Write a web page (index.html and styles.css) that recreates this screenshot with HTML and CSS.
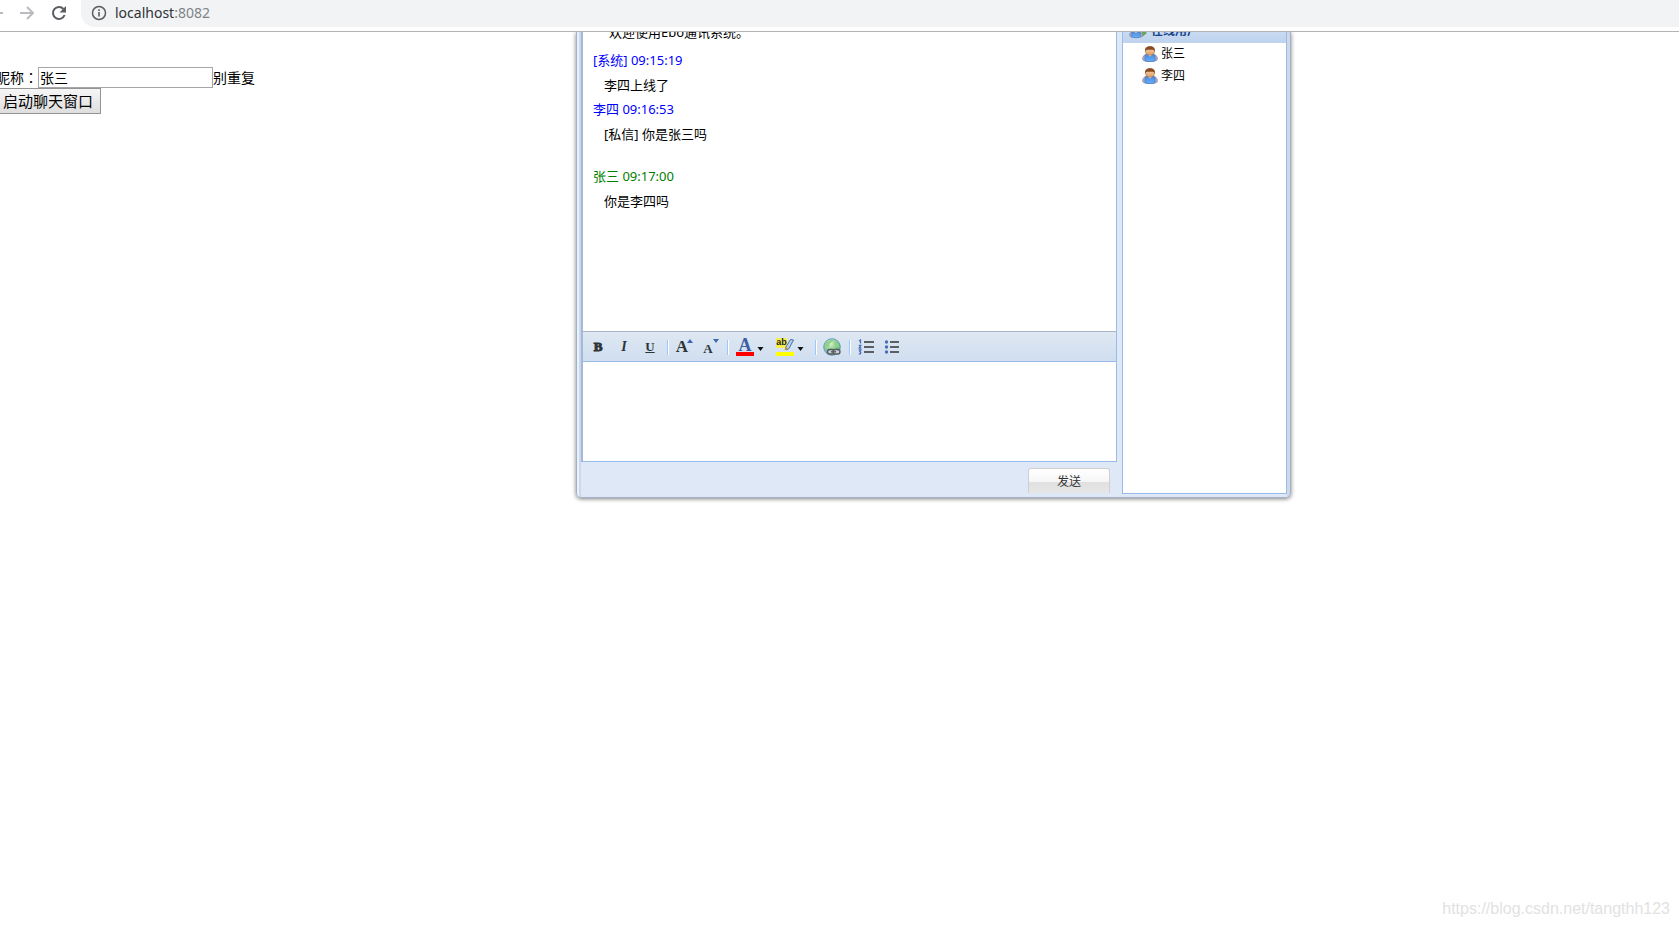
FILE: index.html
```html
<!DOCTYPE html>
<html lang="zh-CN">
<head>
<meta charset="utf-8">
<title>localhost:8082</title>
<link rel="stylesheet" href="styles.css">
</head>
<body>
<svg width="0" height="0" class="defs" aria-hidden="true">
  <defs>
    <linearGradient id="skin" x1="0" y1="0" x2="0" y2="1"><stop offset="0" stop-color="#fbd9b4"/><stop offset="1" stop-color="#dd9a62"/></linearGradient>
    <linearGradient id="shirt" x1="0" y1="0" x2="0" y2="1"><stop offset="0" stop-color="#4a86dc"/><stop offset="1" stop-color="#62b2ff"/></linearGradient>
    <radialGradient id="earth" cx=".4" cy=".3" r=".7"><stop offset="0" stop-color="#d7f2cf"/><stop offset="1" stop-color="#4fae58"/></radialGradient>
    <symbol id="user" viewBox="0 0 16 16">
      <path d="M.5 13C.5 10.500 2 8.800 4.500 8.300h7c2.500.5 4 2.200 4 4.700 0 1.800-3.200 2.600-7.500 2.600S.5 14.800.5 13z" fill="#a9a6bd" stroke="#8a8aa8" stroke-width=".6"/>
      <path d="M3.200 9.200L5 8.300h6l1.800.9.2 5.500c-1.300.6-3 .9-5 .9s-3.700-.3-5-.9z" fill="url(#shirt)" stroke="#4270bd" stroke-width=".6"/>
      <path d="M5.600 8.500h4.800L8 10.600z" fill="#e8f0fb"/>
      <ellipse cx="8" cy="5" rx="4.600" ry="4.300" fill="url(#skin)" stroke="#a8683a" stroke-width=".6"/>
      <path d="M3.200 5.200C2.600 2 4.700.3 8 .3s5.400 1.700 4.800 4.900C12 4 11 3.700 9.800 3.700H6.200C5 3.700 4 4 3.200 5.200z" fill="#8b4b20"/>
    </symbol>
  </defs>
</svg>

<header class="browser">
  <button class="nav" aria-label="后退"><svg width="18" height="18" viewBox="0 0 18 18"><path d="M17 9H3M9 3L3 9l6 6" fill="none" stroke="#b9bbbe" stroke-width="2"/></svg></button>
  <button class="nav" aria-label="前进"><svg width="18" height="18" viewBox="0 0 18 18"><path d="M2 9h13M9 3l6 6-6 6" fill="none" stroke="#b9bbbe" stroke-width="2"/></svg></button>
  <button class="nav reload" aria-label="刷新"><svg width="18" height="18" viewBox="0 0 18 18"><path d="M14.600 11A6 6 0 1 1 13.500 5" fill="none" stroke="#5a5d61" stroke-width="2"/><path d="M16 2v6.500H9.500z" fill="#5a5d61"/></svg></button>
  <div class="address">
    <svg width="16" height="16" viewBox="0 0 16 16"><circle cx="8" cy="8" r="6.500" fill="none" stroke="#5a5d61" stroke-width="1.500"/><path d="M8 7v4.500M8 4.300v1.600" stroke="#5a5d61" stroke-width="1.600"/></svg>
    <span>localhost<span class="port">:8082</span></span>
  </div>
</header>

<main class="page">
  <form class="login">
    <div class="row"><label for="nick">昵称<span class="colon" lang="zh-TW">：</span></label><input id="nick" type="text" value="张三"><span>别重复</span></div>
    <button class="start" type="button">启动聊天窗口</button>
  </form>

  <section class="window">
    <div class="chat">
      <div class="log">
        <p class="msg welcome">欢迎使用Ebo通讯系统。</p>
        <p class="who">[系统] 09:15:19</p>
        <p class="msg">李四上线了</p>
        <p class="who">李四 09:16:53</p>
        <p class="msg">[私信] 你是张三吗</p>
        <p class="who self">张三 09:17:00</p>
        <p class="msg">你是李四吗</p>
      </div>
      <div class="toolbar">
        <button class="tool bold" aria-label="粗体">B</button>
        <button class="tool italic" aria-label="斜体">I</button>
        <button class="tool under" aria-label="下划线">U</button>
        <i class="sep"></i>
        <button class="tool grow" aria-label="放大">A<svg width="6" height="4" viewBox="0 0 6 4"><path d="M0 4l3-4 3 4z" fill="#3f66b0"/></svg></button>
        <button class="tool shrink" aria-label="缩小">A<svg width="6" height="4" viewBox="0 0 6 4"><path d="M0 0h6L3 4z" fill="#3f66b0"/></svg></button>
        <i class="sep"></i>
        <button class="tool combo" aria-label="文字颜色"><span class="ink">A</span><svg width="7" height="4" viewBox="0 0 7 4"><path d="M.5 0h6l-3 4z" fill="#111"/></svg></button>
        <button class="tool combo" aria-label="背景颜色"><span class="mark"><b>ab</b><svg width="18" height="13" viewBox="0 0 18 13"><path d="M9.500 9.500L14.500 1.500l3 .5-4.500 8.500-3 1.500z" fill="#b9cbea" stroke="#4f6fa8"/><path d="M8.500 12.500l1-3.500 3 1.500z" fill="#c19840"/></svg></span><svg width="7" height="4" viewBox="0 0 7 4"><path d="M.5 0h6l-3 4z" fill="#111"/></svg></button>
        <i class="sep"></i>
        <button class="tool" aria-label="链接"><svg width="18" height="18" viewBox="0 0 18 18"><circle cx="9" cy="9" r="8.300" fill="url(#earth)" stroke="#6a9fc0"/><path d="M2 6c2-3 5-4.500 8-4 0 2-3 2-3.500 4.500S3 9 2 11zM12 3c2 1 4 3 4.500 6l-3 .5L11 7z" fill="#8fd08a"/><path d="M2 11c1 3 3 4.500 5 5v-3z" fill="#86b9e6"/><g fill="#c9cfd2" stroke="#555c60" stroke-width="1.400"><rect x="4.500" y="11.500" width="7" height="4.500" rx="2.200"/><rect x="10" y="11.500" width="7" height="4.500" rx="2.200"/><path d="M8 13.800h5"/></g></svg></button>
        <i class="sep"></i>
        <button class="tool" aria-label="编号列表"><svg width="16" height="16" viewBox="0 0 16 16"><path d="M6 3h10M6 8h10M6 13h10" stroke="#333" stroke-width="1.500"/><path d="M1 2l1.500-1v3.500M.8 6.500h2l-1.500 2.500h2M.8 11h2l-1 1.500 1 .8-.5 1.500H.8" fill="none" stroke="#4a6fb8" stroke-width="1.300"/></svg></button>
        <button class="tool" aria-label="项目列表"><svg width="16" height="16" viewBox="0 0 16 16"><path d="M6 3h9M6 8h9M6 13h9" stroke="#333" stroke-width="1.500"/><circle cx="2.500" cy="3" r="1.700" fill="#4a6fb8"/><circle cx="2.500" cy="8" r="1.700" fill="#4a6fb8"/><circle cx="2.500" cy="13" r="1.700" fill="#4a6fb8"/></svg></button>
      </div>
      <textarea class="editor" aria-label="消息内容"></textarea>
      <div class="footer"><button class="send" type="button">发送</button></div>
    </div>
    <aside class="users">
      <h2 class="users-head"><svg width="18" height="16" viewBox="0 0 18 16"><path d="M9 10h4V6l5 4-5 4v-2H9z" fill="#62a854"/><use href="#user" width="14" height="16"/></svg><span>在线用户</span><i class="caret"></i></h2>
      <ul>
        <li><svg width="16" height="16"><use href="#user"/></svg>张三</li>
        <li><svg width="16" height="16"><use href="#user"/></svg>李四</li>
      </ul>
    </aside>
  </section>
  <div class="watermark">https://blog.csdn.net/tangthh123</div>
</main>
</body>
</html>
```
FILE: styles.css
```css
* { box-sizing: border-box; }
body {
  margin: 0;
  height: 100vh;
  display: flex;
  flex-direction: column;
  overflow: hidden;
  background: #fff;
  color: #000;
  font: 13px/24px "Noto Sans", "Noto Sans CJK SC", sans-serif;
}
button, input, textarea { font: inherit; color: inherit; }
p, ul, h2 { margin: 0; padding: 0; }
svg { flex: none; display: block; }
.defs { position: absolute; }

.browser {
  display: flex;
  align-items: flex-start;
  height: 32px;
  border-bottom: 1px solid #b3b3b3;
}
.nav { flex: none; width: 32px; height: 26px; padding: 0; border: 0; background: none; display: grid; place-items: center; }
.nav:first-child { margin-left: -21px; }
.reload { margin-right: 6px; }
.address {
  flex: 1;
  display: flex;
  align-items: center;
  gap: 8px;
  height: 27px;
  padding: 0 10px 2px;
  border-radius: 0 0 0 14px;
  background: #f1f3f4;
  font-size: 14px;
  color: #303236;
}
.port { color: #808488; }

.page { position: relative; flex: 1; overflow: hidden; }
.login { padding-top: 35px; margin-left: -4px; font-size: 14px; line-height: 21px; }
.row { display: flex; height: 21px; }
.colon { font-family: "Noto Sans CJK TC", sans-serif; }
.row input { width: 175px; height: 21px; padding: 0 1px; border: 1px solid #a6a6a6; background: #fff; }
.start {
  display: block;
  height: 26px;
  padding: 0 7px 0 6px;
  border: 1px solid #949494;
  background: linear-gradient(#f6f6f6, #dedede);
  font-size: 15px;
  line-height: 24px;
}

.window {
  position: absolute;
  top: 0;
  left: 576px;
  width: 715px;
  display: flex;
  gap: 5px;
  padding: 0 3px 3px 4px;
  border: 1px solid #a2b1c8;
  border-width: 0 1px 1px;
  border-radius: 0 0 5px 5px;
  background: linear-gradient(to right, #e9f1fa 2px, #cdd9e8 2px, #cdd9e8 4px, #dfe8f6 4px, #dfe8f6 710px, #cdd9e8 710px);
  box-shadow: 0 1px 4px rgba(0, 0, 0, .5);
}
.chat { flex: 1; min-width: 0; display: flex; flex-direction: column; }
.log {
  height: 299px;
  padding-left: 10px;
  overflow: hidden;
  border: solid #99bbe8;
  border-width: 0 1px 0 2px;
  border-left-color: #a5b8da;
  background: #fff;
}
.who { line-height: 25px; color: #00f; }
.msg { padding-left: 11px; line-height: 24px; }
.welcome { margin: -12px 0 4px; padding-left: 16px; }
.self { margin-top: 18px; color: #008000; }

.toolbar {
  display: flex;
  align-items: center;
  height: 31px;
  padding: 1px 0 0 2px;
  border: 1px solid #99bbe8;
  border-left: 2px solid #a5b8da;
  border-top-color: #a9b4c8;
  background: linear-gradient(#dee8f2, #d0def0);
}
.tool {
  position: relative;
  flex: none;
  display: flex;
  align-items: center;
  justify-content: center;
  width: 26px;
  height: 24px;
  padding: 0;
  border: 0;
  background: none;
  color: #2d3436;
  font: bold 13px/16px "Liberation Serif", serif;
}
.bold { font-weight: 900; -webkit-text-stroke: 1px #2d3436; }
.italic { font-style: italic; font-size: 14px; }
.under { text-decoration: underline; }
.grow { font-size: 17px; padding-right: 4px; }
.shrink { font-size: 13px; padding: 4px 4px 0 0; }
.tool.grow svg, .tool.shrink svg { position: absolute; top: 4px; right: 4px; }
.sep { flex: none; width: 2px; height: 15px; margin: 0 2px 0 4px; background: linear-gradient(to right, #98c8ff 1px, #fff 1px); }
.combo { width: 40px; gap: 3px; padding-right: 2px; }
.combo > svg { margin-top: 4px; }
.ink, .mark { position: relative; width: 18px; height: 18px; border-bottom: 4px solid #f00; text-align: center; }
.ink { color: #3d5f9f; font-size: 18px; line-height: 14px; }
.mark { border-color: #ff0; }
.mark b { display: block; width: 11px; height: 10px; background: #f6f04c; color: #222; font: bold 9px/9px "Liberation Sans", sans-serif; }
.mark svg { position: absolute; top: 0; left: 0; }

.editor { display: block; width: 100%; height: 100px; resize: none; border: 1px solid #99bbe8; border-top: 0; border-left: 2px solid #a5b8da; background: #fff; outline: 0; }
.footer { display: flex; justify-content: flex-end; padding: 6px 7px 1px 0; height: 32px; }
.send {
  width: 82px;
  height: 25px;
  border: 1px solid #d0d0d0;
  border-bottom: 0;
  border-radius: 3px 3px 0 0;
  background: linear-gradient(#fff, #f6f6f6 54%, #e0e0e0 54%, #e6e6e6);
  font-size: 12px;
  line-height: 24px;
  color: #333;
}

.users { width: 165px; border: solid #99bbe8; border-width: 0 1px 1px; background: #fff; font-size: 12px; }
.users-head {
  display: flex;
  align-items: center;
  gap: 4px;
  height: 25px;
  margin-top: -14px;
  padding: 0 0 0 6px;
  background: linear-gradient(#d5e3f5, #bfd3ee);
  font-size: 12px;
  line-height: 25px;
  color: #15428b;
}
.caret { width: 3px; height: 3px; background: #15428b; border-radius: 2px; }
.users ul { list-style: none; }
.users li { display: flex; align-items: center; gap: 3px; height: 22px; padding-left: 19px; line-height: 22px; }

.watermark { position: absolute; right: 9px; bottom: 5px; color: #e2e2e2; font: 16px/24px "Liberation Sans", sans-serif; }
```
